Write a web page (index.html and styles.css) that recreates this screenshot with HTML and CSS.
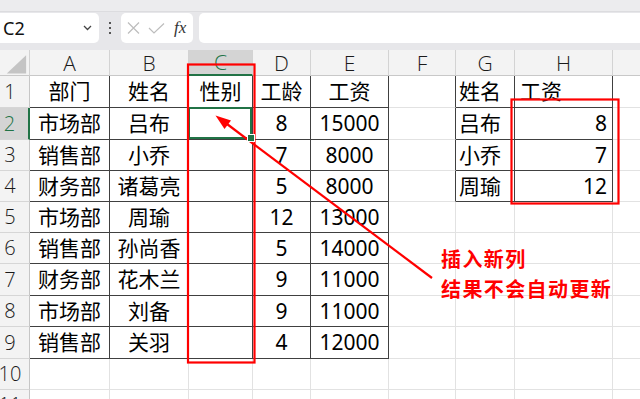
FILE: index.html
```html
<!DOCTYPE html>
<html lang="zh">
<head>
<meta charset="utf-8">
<title>Sheet</title>
<link rel="stylesheet" href="styles.css">
</head>
<body>
<div class="app">
  <div class="topband"></div>
  <div class="toolbar">
    <div class="namebox"><span class="ref">C2</span>
      <svg class="chev" width="9" height="6" viewBox="0 0 9 6"><path d="M1 1 L4.5 4.5 L8 1" fill="none" stroke="#444" stroke-width="1.3"/></svg>
    </div>
    <div class="dots"><i></i><i></i><i></i></div>
    <div class="fxbox">
      <svg width="13" height="12" viewBox="0 0 13 12"><path d="M1 0.5 L12 11.5 M12 0.5 L1 11.5" stroke="#bdbdbd" stroke-width="1.2" fill="none"/></svg>
      <svg width="17" height="11" viewBox="0 0 17 11"><path d="M1 5 L6 10 L16 0.5" stroke="#bdbdbd" stroke-width="1.2" fill="none"/></svg>
      <span class="fx">fx</span>
    </div>
    <div class="formula"></div>
  </div>
  <div class="sheet">
    <div class="h corner"><svg width="30" height="25" viewBox="0 0 30 25"><polygon points="7,24 27,24 27,5" fill="#c4c4c4"/></svg></div>
    <div class="h">A</div><div class="h">B</div><div class="h hsel">C</div><div class="h">D</div><div class="h">E</div><div class="h">F</div><div class="h">G</div><div class="h">H</div><div class="h"></div>

    <div class="r">1</div><div class="t">部门</div><div class="t">姓名</div><div class="t">性别</div><div class="t">工龄</div><div class="t">工资</div><div class="fb"></div><div class="t l">姓名</div><div class="t l2">工资</div><div></div>
    <div class="r rsel">2</div><div class="t">市场部</div><div class="t">吕布</div><div class="t sel"></div><div class="t">8</div><div class="t">15000</div><div class="fb"></div><div class="t l">吕布</div><div class="t rt">8</div><div></div>
    <div class="r">3</div><div class="t">销售部</div><div class="t">小乔</div><div class="t"></div><div class="t">7</div><div class="t">8000</div><div class="fb"></div><div class="t l">小乔</div><div class="t rt">7</div><div></div>
    <div class="r">4</div><div class="t">财务部</div><div class="t">诸葛亮</div><div class="t"></div><div class="t">5</div><div class="t">8000</div><div class="fb"></div><div class="t l">周瑜</div><div class="t rt">12</div><div></div>
    <div class="r">5</div><div class="t">市场部</div><div class="t">周瑜</div><div class="t"></div><div class="t">12</div><div class="t">13000</div><div></div><div></div><div></div><div></div>
    <div class="r">6</div><div class="t">销售部</div><div class="t">孙尚香</div><div class="t"></div><div class="t">5</div><div class="t">14000</div><div></div><div></div><div></div><div></div>
    <div class="r">7</div><div class="t">财务部</div><div class="t">花木兰</div><div class="t"></div><div class="t">9</div><div class="t">11000</div><div></div><div></div><div></div><div></div>
    <div class="r">8</div><div class="t">市场部</div><div class="t">刘备</div><div class="t"></div><div class="t">9</div><div class="t">11000</div><div></div><div></div><div></div><div></div>
    <div class="r">9</div><div class="t">销售部</div><div class="t">关羽</div><div class="t"></div><div class="t">4</div><div class="t">12000</div><div></div><div></div><div></div><div></div>
    <div class="r">10</div><div></div><div></div><div></div><div></div><div></div><div></div><div></div><div></div><div></div>
    <div class="r">11</div><div></div><div></div><div></div><div></div><div></div><div></div><div></div><div></div><div></div>
  </div>
  <svg class="overlay" width="640" height="399" viewBox="0 0 640 399">
    <rect x="188" y="64.5" width="66.5" height="298" fill="none" stroke="#f00" stroke-width="2.2"/>
    <rect x="511.5" y="99.5" width="107" height="104" fill="none" stroke="#f00" stroke-width="2.2"/>
    <line x1="432" y1="278" x2="227" y2="124" stroke="#f00" stroke-width="2.2"/>
    <polygon points="215.5,115.5 231,120.5 224.5,129" fill="#f00"/>
  </svg>
  <div class="note">插入新列<br>结果不会自动更新</div>
</div>
</body>
</html>
```
FILE: styles.css
```css
* { box-sizing: border-box; margin: 0; padding: 0; }
html, body { width: 640px; height: 399px; overflow: hidden; background: #fff; }
body { font-family: "Noto Sans", "Noto Sans CJK SC", sans-serif; color: #000; }
.app { position: relative; width: 640px; height: 399px; overflow: hidden; }

.topband { height: 12px; background: #ececee; border-bottom: 1px solid #dcdcdf; }
.toolbar { height: 38px; background: #e7e7ea; display: flex; align-items: flex-start; padding-top: 1px; }
.namebox { width: 99px; height: 30px; background: #fff; border-radius: 0 5px 5px 0; display: flex; align-items: center; justify-content: space-between; padding: 0 7px 0 3px; }
.ref { font-size: 18px; color: #111; }
.dots { width: 22px; height: 30px; display: flex; flex-direction: column; align-items: center; justify-content: center; gap: 3px; }
.dots i { display: block; width: 2px; height: 2px; background: #555; }
.fxbox { width: 72px; height: 30px; background: #fff; border-radius: 5px; display: flex; align-items: center; padding-left: 6px; gap: 8px; }
.fx { font-family: "Liberation Serif", serif; font-style: italic; font-size: 17px; color: #333; margin-left: 1px; }
.formula { flex: 1; height: 30px; background: #fff; border-radius: 5px 0 0 5px; margin-left: 6px; }

.sheet { display: grid; width: 673px;
  grid-template-columns: 30px 80px 79px 64px 58px 78px 67px 59px 98px 60px;
  grid-template-rows: 26px 32px 32px 31px 31px 31px 31px 32px 31px 32px 31px 31px; }
.sheet > div { border-right: 1px solid #e2e2e2; border-bottom: 1px solid #e2e2e2; display: flex; align-items: center; justify-content: center; font-size: 21px; line-height: 1.15; white-space: nowrap; overflow: hidden; }

.sheet > .h { background: #f3f3f3; border-right-color: #d3d3d3; border-bottom-color: #c8c8c8; font-family: "Open Sans", "Noto Sans", sans-serif; font-weight: 300; font-size: 21px; line-height: 1; color: #1a1a1a; padding-top: 1px; }
.sheet > .corner { align-items: flex-start; justify-content: flex-start; padding-top: 0; }
.sheet > .hsel { background: #d4d4d4; color: #217346; border-bottom: 2px solid #217346; }
.sheet > .r { background: #f3f3f3; border-right-color: #c6c6c6; border-bottom-color: #d6d6d6; font-family: "Open Sans", "Noto Sans", sans-serif; font-weight: 300; font-size: 20px; line-height: 1; color: #1a1a1a; padding-right: 9px; }
.sheet > .rsel { background: #d4d4d4; color: #217346; border-right: 2px solid #217346; }

.sheet > .t { border-right-color: #404040; border-bottom-color: #404040; }
.sheet > .fb { border-right-color: #404040; }
.sheet > .l { justify-content: flex-start; padding-left: 3px; }
.sheet > .l2 { justify-content: flex-start; padding-left: 5px; }
.sheet > .rt { justify-content: flex-end; padding-right: 5px; }

.sheet > .sel { position: relative; overflow: visible; }
.sel::after { content: ""; position: absolute; left: -1px; top: -1px; right: 0; bottom: 0; border: 2px solid #217346; }
.sel::before { content: ""; position: absolute; right: -3px; bottom: -3px; width: 6px; height: 6px; background: #217346; border: 1px solid #fff; z-index: 2; }

.overlay { position: absolute; left: 0; top: 0; pointer-events: none; }
.note { position: absolute; left: 441px; top: 244px; font-family: "Noto Sans CJK SC", sans-serif; font-weight: 700; font-size: 20px; line-height: 30px; letter-spacing: 1.4px; color: #f00; }
```
